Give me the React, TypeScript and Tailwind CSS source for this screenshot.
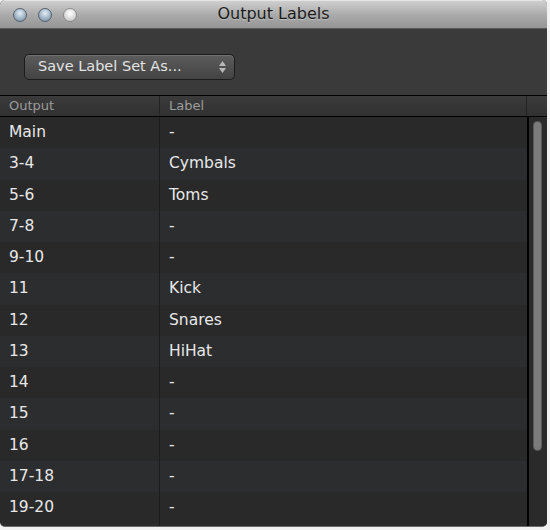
import React from "react"

const rows: [string, string][] = [
  ["Main", "-"],
  ["3-4", "Cymbals"],
  ["5-6", "Toms"],
  ["7-8", "-"],
  ["9-10", "-"],
  ["11", "Kick"],
  ["12", "Snares"],
  ["13", "HiHat"],
  ["14", "-"],
  ["15", "-"],
  ["16", "-"],
  ["17-18", "-"],
  ["19-20", "-"],
]

function Light({ dim }: { dim?: boolean }) {
  return (
    <div
      className={
        dim
          ? "w-[14px] h-[14px] rounded-full border border-[#8a8a8a] bg-[radial-gradient(circle_at_50%_35%,#ffffff,#d8d8d8_60%,#b8b8b8)]"
          : "w-[14px] h-[14px] rounded-full border border-[#55606b] bg-[radial-gradient(circle_at_50%_35%,#e4eef6,#9fb4c6_55%,#6f8598)]"
      }
    />
  )
}

export default function App() {
  return (
    <div
      className="w-[550px] h-[530px] bg-[#f2f2f2]"
      style={{ fontFamily: '"DejaVu Sans", "Liberation Sans", sans-serif' }}
    >
      <div className="w-[547px] h-[527px] rounded-[5px] overflow-hidden flex flex-col bg-[#2b2b2c] border-b border-[#6a6a6a]">
        {/* title bar */}
        <div className="h-[29px] shrink-0 flex items-center relative bg-gradient-to-b from-[#cfcfcf] via-[#ababab] to-[#959595] border-t border-[#e4e4e4] border-b border-b-[#5a5a5a]">
          <div className="flex items-center gap-[11px] pl-[13px]">
            <Light />
            <Light />
            <Light dim />
          </div>
          <div className="absolute inset-0 flex items-center justify-center text-[16px] text-[#1a1a1a] pb-[1px] [text-shadow:0_1px_0_rgba(255,255,255,0.3)]">
            Output Labels
          </div>
        </div>

        {/* toolbar */}
        <div className="h-[66px] shrink-0 bg-[#3a3a3a] pt-[25px] pl-[24px]">
          <div className="w-[211px] h-[26px] rounded-[5px] border border-[#1c1c1c] bg-gradient-to-b from-[#5c5c5c] to-[#434343] shadow-[inset_0_1px_0_#707070] flex items-center justify-between pl-[13px] pr-[8px]">
            <span className="text-[14.5px] text-[#e4e4e4]">Save Label Set As...</span>
            <div className="flex flex-col items-center gap-[2px]">
              <svg width="7" height="5" viewBox="0 0 7 5">
                <path d="M3.5 0 L7 5 L0 5 Z" fill="#b8b8b8" />
              </svg>
              <svg width="7" height="5" viewBox="0 0 7 5">
                <path d="M0 0 L7 0 L3.5 5 Z" fill="#b8b8b8" />
              </svg>
            </div>
          </div>
        </div>

        {/* header */}
        <div className="h-[22px] shrink-0 flex border-t border-black border-b bg-gradient-to-b from-[#3b3b3b] to-[#313131] text-[13px] text-[#9c9c9c]">
          <div className="w-[160px] border-r border-[#232323] pl-[9px] flex items-center">Output</div>
          <div className="w-[367px] border-r border-[#232323] pl-[9px] flex items-center">Label</div>
          <div className="flex-1" />
        </div>

        {/* body */}
        <div className="flex-1 flex min-h-0">
          <div className="w-[527px]">
            {rows.map(([out, label], i) => (
              <div
                key={out}
                className={
                  "h-[31.25px] flex items-center text-[15.5px] text-[#e8e8e8] " +
                  (i % 2 === 0 ? "bg-[#29292a]" : "bg-[#2c2d2f]")
                }
              >
                <div className="w-[160px] h-full border-r border-[#1c1c1c] pl-[9px] flex items-center">{out}</div>
                <div className="pl-[9px]">{label}</div>
              </div>
            ))}
            <div className="h-full flex">
              <div className="w-[160px] border-r border-[#1c1c1c]" />
            </div>
          </div>
          <div className="w-[2px] bg-black" />
          <div className="flex-1 bg-[#2a2a2b] pt-[4px] pl-[4px]">
            <div className="w-[9px] h-[330px] rounded-full bg-[#7b7b7b] border border-[#5a5a5a]" />
          </div>
        </div>
      </div>
    </div>
  )
}
